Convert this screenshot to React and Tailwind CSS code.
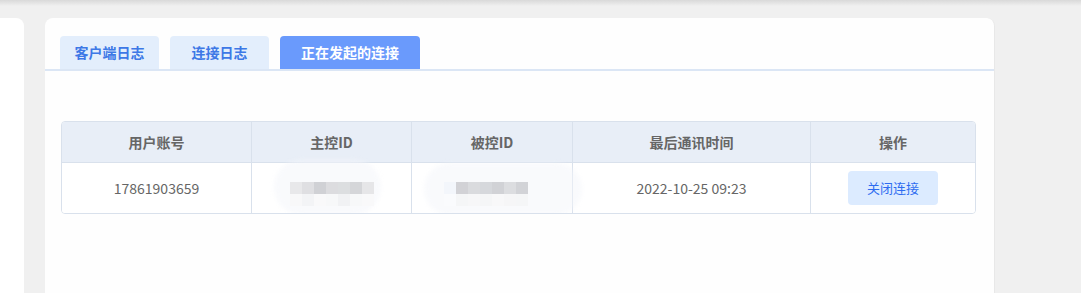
const font = { fontFamily: '"Microsoft YaHei", "Noto Sans CJK SC", sans-serif' };

const tabs = [
  { label: '客户端日志', w: 'w-[99px]' },
  { label: '连接日志', w: 'w-[99px]' },
  { label: '正在发起的连接', w: 'w-[140px]', active: true },
];

const Mosaic = ({ top, bottom }) => (
  <div className="flex flex-col">
    <div className="flex">
      {top.map((c, i) => (
        <div key={i} className="w-3 h-3" style={{ background: c }} />
      ))}
    </div>
    <div className="flex">
      {bottom.map((c, i) => (
        <div key={i} className="w-3 h-3" style={{ background: c }} />
      ))}
    </div>
  </div>
);

export default function App() {
  return (
    <div className="relative w-[1081px] h-[293px] overflow-hidden bg-[#f0f0f0]" style={font}>
      <div className="absolute inset-x-0 top-0 h-[6px] bg-gradient-to-b from-[#d9d9d9] to-[#f0f0f0]" />

      <div className="flex pt-[18px] h-full">
        <div className="w-[24px] h-full bg-white rounded-tr-[8px] shrink-0" />

        <div className="ml-[21px] w-[950px] h-full bg-[#fefefe] rounded-t-[8px] border-r border-[#e8e8e8]">
          <div className="flex gap-[11px] pl-[15px] pt-[18px] border-b-2 border-[#dbe6f5]">
            {tabs.map((t) => (
              <div
                key={t.label}
                className={`${t.w} h-[33px] flex items-center justify-center rounded-t-[4px] text-[14px] font-bold ${
                  t.active ? 'bg-[#6a9afc] text-white' : 'bg-[#e3eefc] text-[#3d78e6]'
                }`}
              >
                {t.label}
              </div>
            ))}
          </div>

          <div className="px-[16px] pt-[50px]">
            <div className="w-[915px] border border-[#d9e1ec] rounded-[4px] overflow-hidden">
              <div className="grid grid-cols-[190px_160px_161px_238px_1fr] h-[41px] bg-[#e8eef7] border-b border-[#d9e1ec] text-[14px] font-bold text-[#666]">
                {['用户账号', '主控ID', '被控ID', '最后通讯时间', '操作'].map((h, i) => (
                  <div key={h} className={`flex items-center justify-center ${i < 4 ? 'border-r border-[#d9e1ec]' : ''}`}>
                    {h}
                  </div>
                ))}
              </div>
              <div className="grid grid-cols-[190px_160px_161px_238px_1fr] h-[50px] bg-white text-[14px] text-[#666]">
                <div className="flex items-center justify-center border-r border-[#d9e1ec]">17861903659</div>
                <div className="relative flex items-center justify-center border-r border-[#d9e1ec]">
                  <div className="absolute left-[22px] right-[30px] top-[-4px] bottom-[-2px] rounded-[40px] bg-[#f3f5fa] opacity-50 blur-[2px]" />
                  <div className="relative pt-[11px]">
                    <Mosaic
                      top={['#e8e8ea', '#dfdfe2', '#d0d1d5', '#dcdcdf', '#dcdee0', '#d5d6d9', '#e6e6e8']}
                      bottom={['#f8f8f9', '#f3f4f6', '#f9f9fa', '#f7f8f9', '#f1f2f4', '#f7f8f9', '#f9f9fa']}
                    />
                  </div>
                </div>
                <div className="relative flex items-center justify-center border-r border-[#d9e1ec]">
                  <div className="absolute left-[12px] right-[-10px] top-[0px] bottom-[-2px] rounded-[40px] bg-[#f3f5fa] opacity-50 blur-[2px]" />
                  <div className="relative left-[-6px] pt-[11px]">
                    <Mosaic
                      top={['#f3f6fb', '#d2d2d6', '#dadbde', '#d6d8dc', '#d1d2d6', '#dcdde0', '#d2d3d7']}
                      bottom={['#fafbfd', '#f5f6f7', '#f7f7f8', '#f5f6f7', '#f8f8f9', '#f6f6f7', '#f5f6f7']}
                    />
                  </div>
                </div>
                <div className="flex items-center justify-center border-r border-[#d9e1ec]">2022-10-25 09:23</div>
                <div className="flex items-center justify-center">
                  <button className="w-[90px] h-[34px] rounded-[4px] bg-[#dcebff] text-[#2e6cf0] text-[13px]">关闭连接</button>
                </div>
              </div>
            </div>
          </div>
        </div>
      </div>
    </div>
  );
}
